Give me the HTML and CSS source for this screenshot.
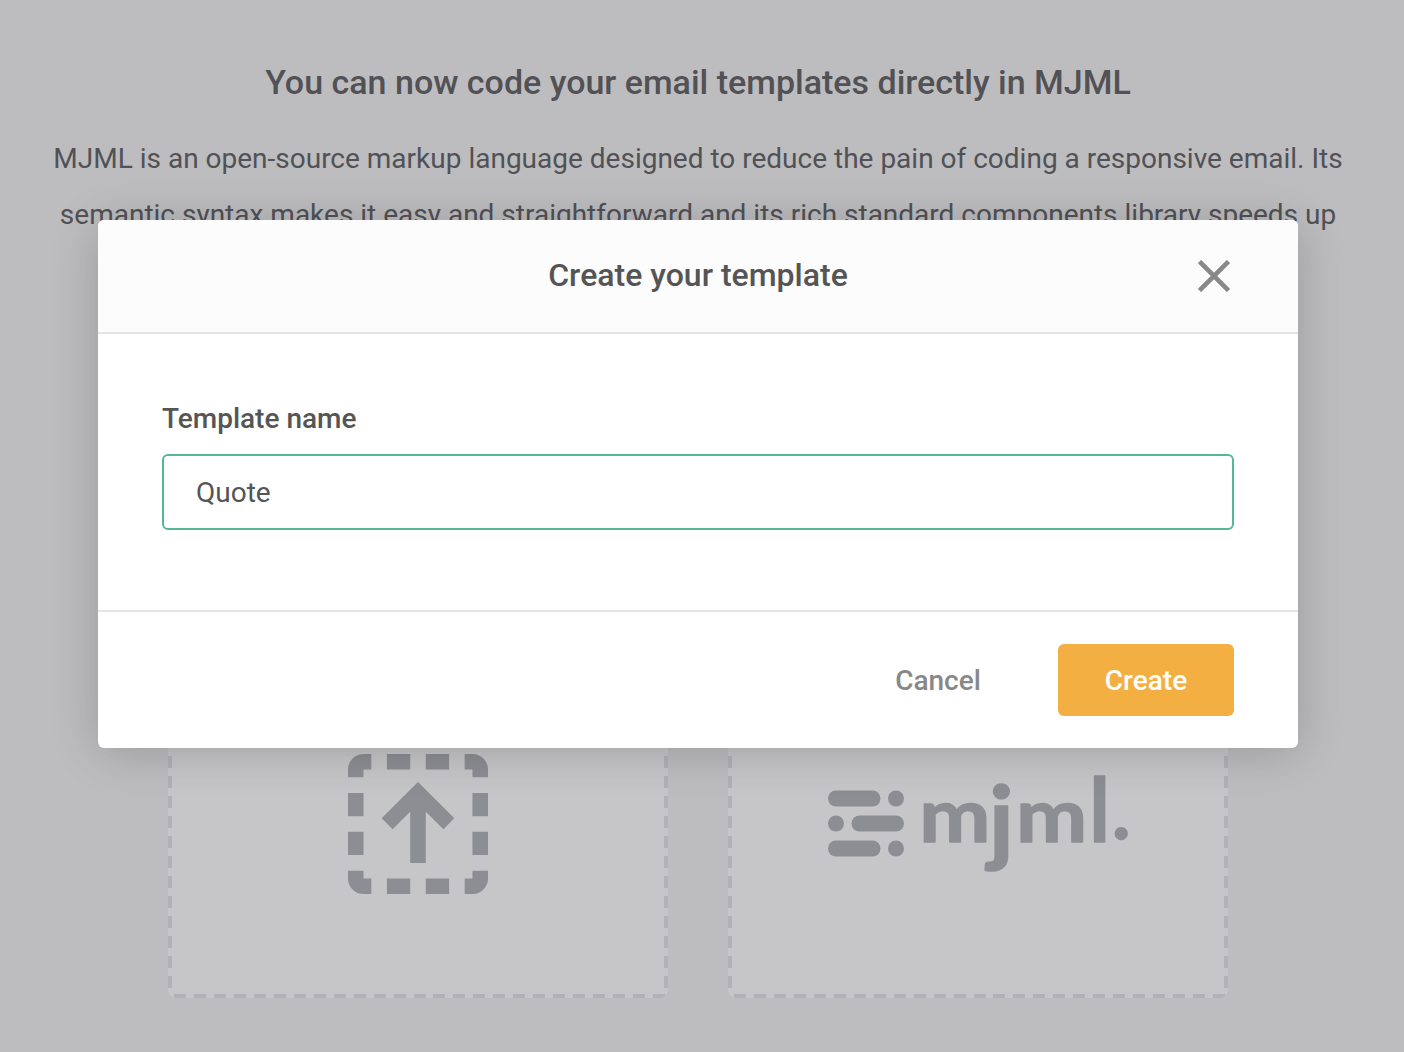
FILE: index.html
```html
<!DOCTYPE html>
<html lang="en">
<head>
<meta charset="utf-8">
<title>Create your template</title>
<link rel="stylesheet" href="styles.css">
</head>
<body>
<main class="page">
  <header class="intro">
    <h1 class="intro-title">You can now code your email templates directly in MJML</h1>
    <p class="intro-text"><span class="line">MJML is an open-source markup language designed to reduce the pain of coding a responsive email. Its</span> <span class="line">semantic syntax makes it easy and straightforward and its rich standard components library speeds up</span></p>
  </header>
  <section class="cards">
    <div class="card">
      <svg class="upload" viewBox="0 0 18 18" aria-hidden="true">
        <path d="M0 3V2a2 2 0 0 1 2-2h1v2H2v1zM15 0h1a2 2 0 0 1 2 2v1h-2V2h-1zM18 15v1a2 2 0 0 1-2 2h-1v-2h1v-1zM3 18H2a2 2 0 0 1-2-2v-1h2v1h1z"/>
        <path d="M5 0h3v2H5zM10 0h3v2h-3zM5 16h3v2H5zM10 16h3v2h-3zM0 5h2v3H0zM0 10h2v3H0zM16 5h2v3h-2zM16 10h2v3h-2z"/>
        <path d="M9 3.6l4.67 4.67-1.4 1.41L10 7.44V14H8V7.44L5.73 9.68l-1.4-1.41z"/>
      </svg>
    </div>
    <div class="card">
      <svg class="mjml" viewBox="0 0 300 104" aria-label="mjml.">
        <rect x="0" y="18.5" width="52.5" height="16" rx="8"/><circle cx="68" cy="26.5" r="8"/>
        <circle cx="8" cy="51.5" r="8"/><rect x="23.5" y="43.5" width="52.5" height="16" rx="8"/>
        <rect x="0" y="68.5" width="52.5" height="16" rx="8"/><circle cx="68" cy="76.5" r="8"/>
        <g class="wordmark">
          <text transform="translate(91.3 69.7) scale(1.09 .95)">m</text>
          <text transform="translate(161 81.7) scale(1.25 1.2)">j</text>
          <text transform="translate(188 69.7) scale(1.09 .95)">m</text>
          <text transform="translate(261.6 69.7) scale(1.04 1.13)">l</text>
          <text transform="translate(284 67.3)">.</text>
        </g>
      </svg>
    </div>
  </section>
</main>
<div class="overlay">
  <div class="modal" role="dialog" aria-labelledby="modal-title">
    <div class="modal-header">
      <h2 class="modal-title" id="modal-title">Create your template</h2>
      <button class="close" aria-label="Close"><svg viewBox="0 0 32 32"><path d="M1.5 1.5l29 29M30.5 1.5l-29 29"/></svg></button>
    </div>
    <div class="modal-body">
      <label class="label" for="name">Template name</label>
      <input class="input" id="name" type="text" value="Quote">
    </div>
    <div class="modal-footer">
      <button class="btn btn-cancel">Cancel</button>
      <button class="btn btn-create">Create</button>
    </div>
  </div>
</div>
</body>
</html>
```
FILE: styles.css
```css
* { box-sizing: border-box; }
body {
  margin: 0;
  height: 1052px;
  overflow: hidden;
  background: #bdbdbf;
  font-family: Roboto, sans-serif;
  color: #515156;
}
.page { width: 1396px; height: 1052px; display: flex; flex-direction: column; }
.intro { height: 598px; padding-top: 54px; text-align: center; }
.intro-title { margin: 0; font-size: 34px; line-height: 56px; font-weight: 500; white-space: nowrap; }
.intro-text { margin: 21px 0 0; font-size: 28px; line-height: 56px; white-space: nowrap; }
.line { display: block; }
.cards { display: flex; justify-content: center; gap: 60px; }
.card {
  --dash: #b1b1b7;
  width: 500px;
  height: 400px;
  padding-top: 156px;
  display: flex;
  justify-content: center;
  align-items: flex-start;
  border-radius: 8px;
  background:
    repeating-linear-gradient(0deg, var(--dash) 0 12px, transparent 12px 19.96px) 0 0 / 4px 390px no-repeat,
    repeating-linear-gradient(0deg, var(--dash) 0 12px, transparent 12px 19.96px) 100% 0 / 4px 390px no-repeat,
    repeating-linear-gradient(90deg, var(--dash) 0 12px, transparent 12px 19.96px) 6px 100% / 491px 4px no-repeat,
    #c6c6c8;
}
.upload { width: 140px; height: 140px; fill: #8d8e94; }
.mjml { width: 300px; height: 104px; margin-top: 18px; fill: #8d8e94; overflow: visible; }
.wordmark { font-family: Lato, sans-serif; font-weight: 700; font-size: 78px; stroke: #8d8e94; stroke-width: 1.4px; stroke-linejoin: round; }
.overlay { position: absolute; top: 0; left: 0; width: 1396px; height: 1052px; padding-top: 220px; display: flex; justify-content: center; align-items: flex-start; }
.modal { width: 1200px; height: 528px; display: flex; flex-direction: column; border-radius: 6px; background: #fff; box-shadow: 0 4px 48px rgba(0, 0, 0, 0.19); color: #555; overflow: hidden; }
.modal-header { height: 114px; padding: 0 68px; display: grid; grid-template-columns: 32px 1fr 32px; align-items: center; background: #fcfcfc; border-bottom: 2px solid #e4e4e4; }
.modal-title { grid-column: 2; margin: 0; padding-bottom: 2px; text-align: center; font-size: 32px; line-height: 40px; font-weight: 500; }
.close { width: 32px; height: 32px; padding: 0; border: 0; background: none; }
.close svg { display: block; width: 32px; height: 32px; stroke: #888; stroke-width: 4.6; fill: none; }
.modal-body { flex: 1; padding: 64px 64px 0; display: flex; flex-direction: column; }
.label { height: 56px; line-height: 42px; font-size: 28px; font-weight: 500; }
.input { height: 76px; padding: 0 32px; border: 2px solid #56b798; border-radius: 6px; outline: 0; background: #fff; color: #555; font: 400 28px Roboto, sans-serif; }
.modal-footer { height: 138px; padding: 0 64px; display: flex; justify-content: flex-end; align-items: center; gap: 30px; border-top: 2px solid #e4e4e4; }
.btn { height: 72px; padding: 0; border: 0; border-radius: 6px; font: 500 28px Roboto, sans-serif; }
.btn-cancel { width: 180px; background: none; color: #888; }
.btn-create { width: 176px; background: #f3af41; color: #fff; }
```
